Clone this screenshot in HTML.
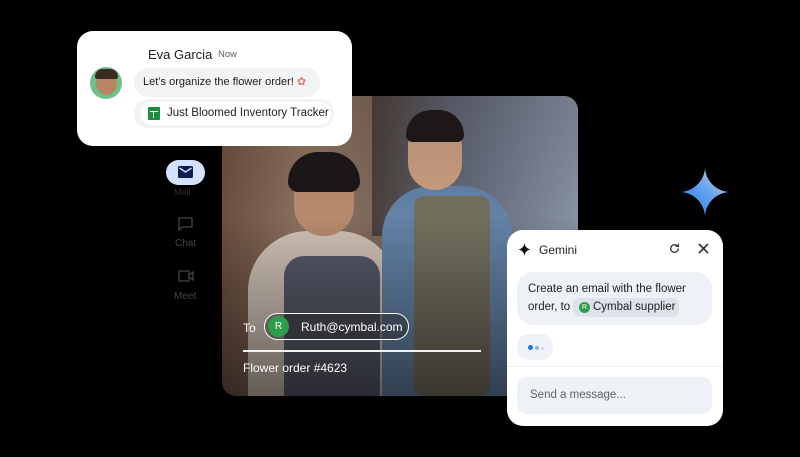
<!DOCTYPE html>
<html><head><style>
*{margin:0;padding:0;box-sizing:border-box}
body{width:800px;height:457px;background:#000;position:relative;overflow:hidden;font-family:"Liberation Sans",sans-serif}
.abs{position:absolute}
.photo{left:222px;top:96px;width:356px;height:300px;border-radius:14px;overflow:hidden;
background:linear-gradient(90deg,#6a4f40 0%,#8e7462 25%,#7a6658 45%,#5d6272 70%,#7d899c 100%)}
.card{background:#fff;border-radius:16px}
</style></head><body>
<div class="abs photo">
 <div class="abs" style="left:150px;top:0;width:206px;height:140px;background:linear-gradient(90deg,#3d3532,#5f6575 40%,#8893a6);opacity:.8"></div>
 <!-- left person -->
 <div class="abs" style="left:26px;top:135px;width:150px;height:175px;border-radius:60px 60px 0 0;background:#cfc2b6"></div>
 <div class="abs" style="left:62px;top:160px;width:96px;height:150px;border-radius:20px 20px 0 0;background:#535766"></div>
 <div class="abs" style="left:72px;top:62px;width:60px;height:78px;border-radius:32px;background:#b68a6c"></div>
 <div class="abs" style="left:66px;top:56px;width:72px;height:40px;border-radius:36px 36px 12px 12px;background:#1b1716"></div>
 <!-- right person -->
 <div class="abs" style="left:160px;top:90px;width:130px;height:210px;border-radius:50px 50px 0 0;background:#6282a6"></div>
 <div class="abs" style="left:192px;top:100px;width:76px;height:200px;border-radius:10px;background:#726f5e"></div>
 <div class="abs" style="left:186px;top:22px;width:54px;height:72px;border-radius:30px;background:#c99e80"></div>
 <div class="abs" style="left:184px;top:14px;width:58px;height:32px;border-radius:30px 30px 8px 8px;background:#1d1918"></div>
 <div class="abs" style="left:0;top:0;width:356px;height:300px;background:linear-gradient(180deg,rgba(30,20,15,.15),rgba(0,0,0,0) 40%,rgba(10,8,8,.55) 100%)"></div>
 <div class="abs" style="left:21px;top:225px;color:#fff;font-size:12px">To</div>
 <div class="abs" style="left:42px;top:217px;width:145px;height:27px;border:1.5px solid #fff;border-radius:14px;background:rgba(40,40,40,.45)"></div>
 <div class="abs" style="left:46px;top:220px;width:21px;height:21px;border-radius:50%;background:#2f9e4a;color:#fff;font-size:10px;text-align:center;line-height:21px">R</div>
 <div class="abs" style="left:79px;top:224px;color:#fff;font-size:12px">Ruth@cymbal.com</div>
 <div class="abs" style="left:21px;top:254px;width:238px;height:2px;background:#f2f2f2"></div>
 <div class="abs" style="left:21px;top:265px;color:#fff;font-size:12px">Flower order #4623</div>
</div>

<!-- sidebar -->
<div class="abs" style="left:166px;top:160px;width:39px;height:25px;border-radius:13px;background:#d3e3fd"></div>
<svg class="abs" style="left:178px;top:166px" width="15" height="12" viewBox="0 0 15 12"><rect width="15" height="12" rx="1.5" fill="#0b1f55"/><path d="M1.5 2l6 4 6-4" stroke="#d3e3fd" stroke-width="1.4" fill="none"/></svg>
<div class="abs" style="left:174px;top:187px;color:#2a2a2a;font-size:9px">Mail</div>
<svg class="abs" style="left:178px;top:217px" width="15" height="14" viewBox="0 0 15 14"><path d="M1 1h13v9H4l-3 3z" stroke="#444" stroke-width="1.3" fill="none"/></svg>
<div class="abs" style="left:175px;top:238px;color:#444;font-size:10px">Chat</div>
<svg class="abs" style="left:178px;top:270px" width="16" height="12" viewBox="0 0 16 12"><rect x="1" y="1" width="10" height="10" stroke="#444" stroke-width="1.3" fill="none"/><path d="M11 5l4-3v8l-4-3" stroke="#444" stroke-width="1.3" fill="none"/></svg>
<div class="abs" style="left:174px;top:291px;color:#444;font-size:10px">Meet</div>

<!-- top card -->
<div class="abs card" style="left:77px;top:31px;width:275px;height:115px"></div>
<div class="abs" style="left:148px;top:47px;font-size:13px;color:#202124">Eva Garcia</div>
<div class="abs" style="left:218px;top:49px;font-size:9.5px;color:#5f6368">Now</div>
<div class="abs" style="left:90px;top:67px;width:32px;height:32px;border-radius:50%;background:#6cc08a"></div>
<div class="abs" style="left:96px;top:71px;width:21px;height:24px;border-radius:50%;background:#b88565"></div>
<div class="abs" style="left:95px;top:69px;width:23px;height:10px;border-radius:10px 10px 3px 3px;background:#3a2a22"></div>
<div class="abs" style="left:134px;top:68px;width:186px;height:29px;border-radius:14px;background:#f1f3f4"></div>
<div class="abs" style="left:143px;top:75px;font-size:11px;color:#202124">Let’s organize the flower order! <span style="color:#e07a6a">✿</span></div>
<div class="abs" style="left:134px;top:99px;width:200px;height:29px;border-radius:14px;background:#f1f3f4"></div>
<div class="abs" style="left:141px;top:102px;width:190px;height:23px;border-radius:11px;background:#fff"></div>
<div class="abs" style="left:148px;top:107px;width:12px;height:13px;border-radius:1px;background:#1e8e3e"></div>
<div class="abs" style="left:150px;top:111px;width:8px;height:1px;background:#fff"></div>
<div class="abs" style="left:153px;top:111px;width:1px;height:7px;background:#fff"></div>
<div class="abs" style="left:167px;top:107px;font-size:11.5px;color:#202124">Just Bloomed Inventory Tracker</div>

<!-- gemini star -->
<svg class="abs" style="left:681px;top:168px" width="48" height="48" viewBox="0 0 48 48"><defs><linearGradient id="g" x1="0" y1="1" x2="1" y2="0"><stop offset="0" stop-color="#1a73e8"/><stop offset=".55" stop-color="#6aa6f0"/><stop offset="1" stop-color="#f4d2b8"/></linearGradient></defs><path d="M24 0C25 13 35 23 48 24C35 25 25 35 24 48C23 35 13 25 0 24C13 23 23 13 24 0Z" fill="url(#g)"/></svg>

<!-- gemini card -->
<div class="abs card" style="left:507px;top:230px;width:216px;height:196px"></div>
<svg class="abs" style="left:518px;top:243px" width="13" height="13" viewBox="0 0 48 48"><path d="M24 0C25 13 35 23 48 24C35 25 25 35 24 48C23 35 13 25 0 24C13 23 23 13 24 0Z" fill="#111"/></svg>
<div class="abs" style="left:539px;top:243px;font-size:12px;color:#202124">Gemini</div>
<svg class="abs" style="left:668px;top:242px" width="13" height="13" viewBox="0 0 24 24"><path d="M19 12a7 7 0 1 1-2.1-5" stroke="#333" stroke-width="2.4" fill="none"/><path d="M19 3v5h-5" stroke="#333" stroke-width="2.4" fill="none"/></svg>
<svg class="abs" style="left:698px;top:243px" width="11" height="11" viewBox="0 0 11 11"><path d="M1 1l9 9M10 1l-9 9" stroke="#333" stroke-width="1.6"/></svg>
<div class="abs" style="left:517px;top:272px;width:195px;height:53px;border-radius:16px;background:#eef1f6"></div>
<div class="abs" style="left:528px;top:283px;font-size:11.5px;color:#202124">Create an email with the flower</div>
<div class="abs" style="left:573px;top:298px;width:106px;height:19px;border-radius:6px;background:#dde3ea"></div>
<div class="abs" style="left:528px;top:301px;font-size:11.5px;color:#202124">order, to</div>
<div class="abs" style="left:579px;top:302px;width:11px;height:11px;border-radius:50%;background:#2f9e4a;color:#fff;font-size:7px;text-align:center;line-height:11px">R</div>
<div class="abs" style="left:593px;top:301px;font-size:11.5px;color:#202124">Cymbal supplier</div>
<div class="abs" style="left:517px;top:334px;width:36px;height:26px;border-radius:12px;background:#eef1f6"></div>
<div class="abs" style="left:528px;top:345px;width:5px;height:5px;border-radius:50%;background:#1a73e8"></div>
<div class="abs" style="left:535px;top:346px;width:4px;height:4px;border-radius:50%;background:#8ab4f8"></div>
<div class="abs" style="left:541px;top:347px;width:3px;height:3px;border-radius:50%;background:#d2d8e0"></div>
<div class="abs" style="left:507px;top:366px;width:216px;height:1px;background:#eceef1"></div>
<div class="abs" style="left:517px;top:377px;width:195px;height:37px;border-radius:10px;background:#eef1f6"></div>
<div class="abs" style="left:530px;top:389px;font-size:11.5px;color:#5f6368">Send a message...</div>
</body></html>
